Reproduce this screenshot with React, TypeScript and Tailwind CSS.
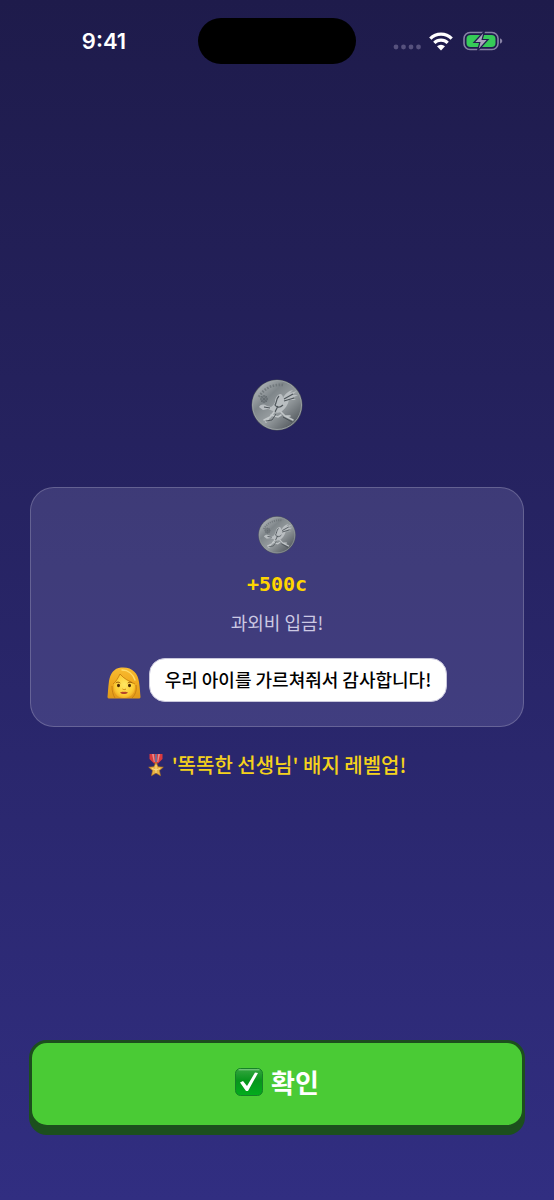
function Coin({ className }: { className: string }) {
  return (
    <svg viewBox="0 0 52 52" className={className} role="img" aria-label="동전">
      <defs>
        <linearGradient id="coinFace" x1="0.1" y1="0.1" x2="0.85" y2="0.9">
          <stop offset="0" stopColor="#b0b5b8" />
          <stop offset="0.3" stopColor="#7f868a" />
          <stop offset="0.6" stopColor="#989ea1" />
          <stop offset="1" stopColor="#565c61" />
        </linearGradient>
      </defs>
      <circle cx="26" cy="26" r="25.5" fill="#50565c" />
      <circle cx="26" cy="26" r="24.5" fill="url(#coinFace)" stroke="#a6acb0" strokeWidth="0.8" />
      <path d="M8 18C13 9 22 5 32 6" fill="none" stroke="#666d72" strokeWidth="2.6" strokeDasharray="1.6 1.4" opacity="0.7" />
      {/* flower */}
      <g fill="none" stroke="#5b6267" strokeWidth="0.8" opacity="0.8">
        <circle cx="13" cy="20" r="3.2" />
        <path d="M13 16v8M9 20h8M10 17l6 6M16 17l-6 6" />
      </g>
      {/* bird */}
      <path d="M8 28c2-3 5-3 8-1l4 1c2-1 3-3 4-5 0-4 2-7 5-8 2 0 3 2 3 4 2-4 5-7 10-8l-3 3 7-2-5 4 6 0-6 3 4 2-7 0c-1 5-4 9-8 12-3 1-6 1-8-1l-5-2-5 1z" fill="#b9bec1" />
      <path d="M28 17c-3 3-2 6-4 9 2 3 5 3 8 0M33 20l9-5M33 22l10-3M13 28l6 1M27 27l-3 6" fill="none" stroke="#4d5459" strokeWidth="1.2" />
      <path d="M23 33l-4 5-6 3M30 33l4 4 8 4M18 39l-3 4M34 37l5 0M20 36l7 2 3-2" fill="none" stroke="#c2c7c9" strokeWidth="1.6" strokeLinecap="round" />
      <path d="M25 35l-4 6-6 1M32 38l9 5" fill="none" stroke="#454c51" strokeWidth="0.9" />
    </svg>
  )
}

function WomanIcon() {
  return (
    <svg viewBox="0 0 34 34" className="mt-1.5 h-[34px] w-[34px] shrink-0" role="img" aria-label="여자">
      <defs>
        <linearGradient id="hair" x1="0" y1="0" x2="0" y2="1">
          <stop offset="0" stopColor="#f8bc32" />
          <stop offset="0.5" stopColor="#f0aa1e" />
          <stop offset="1" stopColor="#e0991a" />
        </linearGradient>
        <radialGradient id="face" cx="0.5" cy="0.45" r="0.6">
          <stop offset="0" stopColor="#ffe763" />
          <stop offset="0.7" stopColor="#fdcd35" />
          <stop offset="1" stopColor="#eea520" />
        </radialGradient>
      </defs>
      <path d="M14 1.500C7 2 3 8 2 15 1 22 1 27 .5 31c0 1 1 1.500 2 1.500h29c1 0 2-.5 2-1.500-.5-5-.5-9-1.500-15C31 7 25 .5 14 1.500z" fill="url(#hair)" />
      <path d="M7 17c2-2 4-5 6-9 4 5 9 7 15 10 1 9-4 14-11 14S5 26 7 17z" fill="url(#face)" />
      <path d="M6 18c3-2 5-6 7-10 4 5 9 7 15 10" fill="none" stroke="#c98010" strokeWidth="0.9" />
      <path d="M15 4c6 0 11 4 13 10" fill="none" stroke="#ffdc6b" strokeWidth="1.400" strokeLinecap="round" />
      <path d="M5 20c0 5 1 9 3 12M29 19c1 6-1 10-4 13" fill="none" stroke="#c27b10" strokeWidth="0.8" />
      <ellipse cx="11.500" cy="19.500" rx="1.500" ry="1.800" fill="#4a2808" />
      <ellipse cx="22.500" cy="19.500" rx="1.500" ry="1.800" fill="#4a2808" />
      <path d="M9 16.800c1-1 3-1 4 0M21 16.800c1-1 3-1 4 0" fill="none" stroke="#9b5a08" strokeWidth="1" strokeLinecap="round" />
      <path d="M15.500 23c1 .8 2.500.8 3.500 0" fill="none" stroke="#d48614" strokeWidth="1" />
      <path d="M13 26.500c2-1 3-1 4-.5 1-.5 2-.5 4 .5-2 2-6 2-8 0z" fill="#b5452b" />
    </svg>
  )
}

function MedalIcon() {
  return (
    <svg viewBox="0 0 16 24" className="h-6 w-4 shrink-0" role="img" aria-label="훈장">
      <path d="M1.500 1h13v5L10 10.500H6L1.500 6z" fill="#d93a3e" />
      <path d="M4 1h1.800l1 8H5.800zM10.200 1H12l-1.800 8h-1z" fill="#e78d8c" />
      <path d="M7.200 1h1.600v8H7.200z" fill="#5b76aa" />
      <path d="M8 9l2.100 4.700 5.200.5-3.900 3.400 1.100 5.100L8 20.100l-4.500 2.600 1.100-5.100L.7 14.200l5.200-.5z" fill="#e8b443" stroke="#b9781d" strokeWidth="0.6" />
      <path d="M8 12v8M4 15.500l4 1.500 4-1.500" fill="none" stroke="#ffe39a" strokeWidth="0.8" />
    </svg>
  )
}

function CheckIcon() {
  return (
    <svg viewBox="0 0 28 28" className="h-7 w-7" aria-hidden="true">
      <defs>
        <linearGradient id="checkBox" x1="0" y1="0" x2="0" y2="1">
          <stop offset="0" stopColor="#35a640" />
          <stop offset="0.45" stopColor="#08951c" />
          <stop offset="1" stopColor="#02ad1c" />
        </linearGradient>
      </defs>
      <rect x="0.500" y="0.500" width="27" height="27" rx="5" fill="url(#checkBox)" stroke="#168128" />
      <path d="M4 1.800h20" stroke="#86ce8c" strokeWidth="1" strokeLinecap="round" />
      <path d="M5 14.500l3-1.500 4 5L20 4.500l3 .5-10 18h-2z" fill="#fff" />
    </svg>
  )
}

function StatusBar() {
  return (
    <header className="grid h-[82px] grid-cols-[1fr_158px_1fr] items-center">
      <time className="pl-2.5 text-center font-['Inter',sans-serif] text-[22px] font-semibold text-white">9:41</time>
      <div className="h-[46px] rounded-full bg-black" />
      <div className="flex items-center justify-center pr-3.5">
        <svg viewBox="0 0 28 20" className="mr-2 h-5 w-7" aria-hidden="true">
          <g fill="#56517d">
            <circle cx="3" cy="16" r="2.400" />
            <circle cx="10.500" cy="16" r="2.400" />
            <circle cx="18" cy="16" r="2.400" />
            <circle cx="25.500" cy="16" r="2.400" />
          </g>
        </svg>
        <svg viewBox="0 0 24 20" className="mr-2.5 h-5 w-6" aria-hidden="true">
          <path d="M1.300 7.600a15 15 0 0 1 21.400 0M5.300 11.800a9.500 9.500 0 0 1 13.400 0" fill="none" stroke="#fff" strokeWidth="3.200" />
          <path d="M8 15.200a6 6 0 0 1 8 0L12 19.500z" fill="#fff" />
        </svg>
        <svg viewBox="0 0 40 20" className="h-5 w-10" aria-label="충전 중" role="img">
          <rect x="1" y="1.500" width="34" height="17" rx="6" fill="none" stroke="#8782a5" strokeWidth="1.600" />
          <rect x="3.500" y="4" width="29" height="12" rx="4" fill="#36cc58" />
          <path d="M37 7.500c3 .5 3 4.500 0 5z" fill="#8782a5" />
          <path d="M21.500 0L11 11.500h5.800L14.500 20 25 8.500h-5.800z" fill="#aaa5bc" stroke="#211d4f" strokeWidth="1.200" />
        </svg>
      </div>
    </header>
  )
}

export default function App() {
  return (
    <div className="flex min-h-screen flex-col bg-linear-to-b/srgb from-[#1e1b4b] to-[#312e81] font-['Noto_Sans_CJK_KR',sans-serif]">
      <StatusBar />

      <main className="flex flex-1 flex-col items-center justify-center px-[30px]">
        <div className="pt-9 pb-14">
          <Coin className="h-[52px] w-[52px]" />
        </div>

        {/* Reward card */}
        <section className="flex w-full flex-col items-center rounded-3xl border border-white/20 bg-[#8683ba]/25 px-4 pt-7 pb-6">
          <Coin className="h-[38px] w-[38px]" />
          <p className="mt-3 font-['DejaVu_Sans_Mono',monospace] text-xl leading-9 font-bold text-[#ffd600]">+500c</p>
          <p className="mt-2 text-lg leading-6 text-[#ccc9e3]">과외비 입금!</p>
          <div className="mt-6 flex items-center gap-2">
            <WomanIcon />
            <p className="rounded-2xl border border-[#c9c7dc] bg-white px-[15px] pt-2 pb-2.5 text-lg leading-6 font-medium text-black">
              우리 아이를 가르쳐줘서 감사합니다!
            </p>
          </div>
        </section>

        <p className="mt-6 flex items-center gap-2 text-xl leading-7 font-medium text-[#f5d21c]">
          <MedalIcon />
          '똑똑한 선생님' 배지 레벨업!
        </p>
      </main>

      <footer className="px-[29px] pb-[72px]">
        <button
          type="button"
          className="flex w-full items-center justify-center gap-2 rounded-[18px] border-3 border-[#1c4f1d] bg-[#4acb35] pt-5 pb-6 text-[26px] leading-[38px] font-bold text-white shadow-[0_7px_0_#1c4f1d]"
        >
          <CheckIcon />
          확인
        </button>
      </footer>
    </div>
  )
}
